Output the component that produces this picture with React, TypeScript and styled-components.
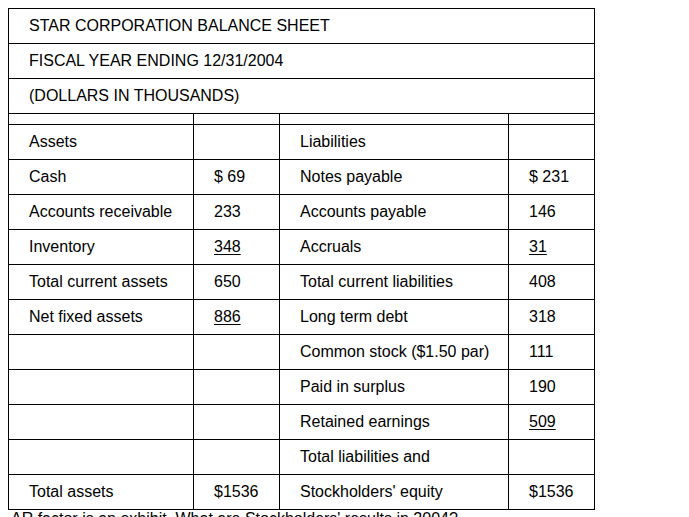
import React from "react";
import styled, { createGlobalStyle } from "styled-components";

const GlobalStyle = createGlobalStyle`
  html, body {
    margin: 0;
    padding: 0;
    background: #ffffff;
  }
  body {
    padding: 8px;
    height: 517px;
    overflow: hidden;
    box-sizing: border-box;
    font-family: "Liberation Sans", Arial, Helvetica, sans-serif;
    color: #000000;
  }
`;

const Sheet = styled.table`
  border-collapse: collapse;
  table-layout: fixed;
  width: 586px;
  font-size: 16px;
`;

const TitleCell = styled.td`
  height: 34px;
  padding: 0 0 0 20px;
  border: 1px solid #000;
  vertical-align: middle;
  white-space: nowrap;
`;

const SpacerCell = styled.td`
  height: 10px;
  padding: 0;
  border: 1px solid #000;
`;

const Cell = styled.td<{ $underline?: boolean }>`
  height: 34px;
  padding: 0 0 0 20px;
  border: 1px solid #000;
  vertical-align: middle;
  white-space: nowrap;
  text-decoration: ${(p) => (p.$underline ? "underline" : "none")};
  text-underline-offset: 2px;
`;

const Note = styled.p`
  margin: 0;
  padding-left: 3px;
  font-size: 16px;
  white-space: nowrap;
`;

type Line = {
  asset: string;
  assetValue: string;
  assetUnderline?: boolean;
  liability: string;
  liabilityValue: string;
  liabilityUnderline?: boolean;
};

const lines: Line[] = [
  { asset: "Assets", assetValue: "", liability: "Liabilities", liabilityValue: "" },
  { asset: "Cash", assetValue: "$ 69", liability: "Notes payable", liabilityValue: "$ 231" },
  { asset: "Accounts receivable", assetValue: "233", liability: "Accounts payable", liabilityValue: "146" },
  {
    asset: "Inventory",
    assetValue: "348",
    assetUnderline: true,
    liability: "Accruals",
    liabilityValue: "31",
    liabilityUnderline: true,
  },
  { asset: "Total current assets", assetValue: "650", liability: "Total current liabilities", liabilityValue: "408" },
  {
    asset: "Net fixed assets",
    assetValue: "886",
    assetUnderline: true,
    liability: "Long term debt",
    liabilityValue: "318",
  },
  { asset: "", assetValue: "", liability: "Common stock ($1.50 par)", liabilityValue: "111" },
  { asset: "", assetValue: "", liability: "Paid in surplus", liabilityValue: "190" },
  {
    asset: "",
    assetValue: "",
    liability: "Retained earnings",
    liabilityValue: "509",
    liabilityUnderline: true,
  },
  { asset: "", assetValue: "", liability: "Total liabilities and", liabilityValue: "" },
  { asset: "Total assets", assetValue: "$1536", liability: "Stockholders' equity", liabilityValue: "$1536" },
];

const titles = [
  "STAR CORPORATION BALANCE SHEET",
  "FISCAL YEAR ENDING 12/31/2004",
  "(DOLLARS IN THOUSANDS)",
];

export default function App() {
  return (
    <>
      <GlobalStyle />
      <Sheet>
        <colgroup>
          <col style={{ width: 185 }} />
          <col style={{ width: 86 }} />
          <col style={{ width: 229 }} />
          <col style={{ width: 86 }} />
        </colgroup>
        <tbody>
          {titles.map((t) => (
            <tr key={t}>
              <TitleCell colSpan={4}>{t}</TitleCell>
            </tr>
          ))}
          <tr>
            <SpacerCell />
            <SpacerCell />
            <SpacerCell />
            <SpacerCell />
          </tr>
          {lines.map((l, i) => (
            <tr key={i}>
              <Cell>{l.asset}</Cell>
              <Cell $underline={l.assetUnderline}>{l.assetValue}</Cell>
              <Cell>{l.liability}</Cell>
              <Cell $underline={l.liabilityUnderline}>{l.liabilityValue}</Cell>
            </tr>
          ))}
        </tbody>
      </Sheet>
      <Note>AR factor is an exhibit. What are Stockholders' results in 2004?</Note>
    </>
  );
}
